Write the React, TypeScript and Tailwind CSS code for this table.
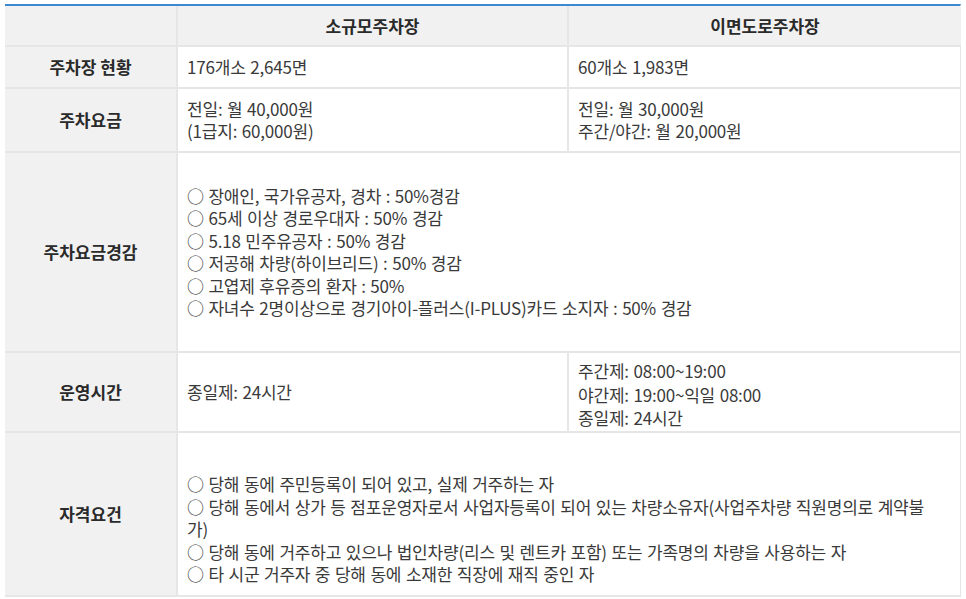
import React from "react";

const font = { fontFamily: '"Noto Sans CJK KR", "Noto Sans", sans-serif' };

function Label({ children }: { children: React.ReactNode }) {
  return (
    <div className="flex items-center justify-center bg-[#f1f1f1] border-r-2 border-b-2 border-[#e6e6e6] font-bold text-[17px] text-[#2a2a2a]">
      {children}
    </div>
  );
}

function Cell({
  children,
  span = false,
  right = true,
  extra = "",
}: {
  children: React.ReactNode;
  span?: boolean;
  right?: boolean;
  extra?: string;
}) {
  return (
    <div
      className={
        "flex px-[9px] text-[17px] leading-[22.5px] tracking-[-0.2px] [word-spacing:1px] text-[#3a3a3a] border-b-2 border-[#e6e6e6] whitespace-nowrap " +
        (span ? "col-span-2 " : "") +
        (right ? "border-r-2 " : "") +
        extra
      }
    >
      {children}
    </div>
  );
}

export default function App() {
  return (
    <div className="w-[966px] h-[599px] bg-white overflow-hidden" style={font}>
      <div className="ml-[5px] mt-[4px] w-[956px] border-t-2 border-[#3a89d2] border-r border-r-[#e6e6e6] grid grid-cols-[173px_391px_392px] grid-rows-[41px_42px_64px_200px_80px_164px]">
        {/* header */}
        <div className="bg-[#f1f1f1] border-r-2 border-b-2 border-[#e6e6e6]" />
        <div className="bg-[#f1f1f1] border-r-2 border-b-2 border-[#e6e6e6] flex items-center justify-center text-[17px] font-bold text-[#2a2a2a]">
          소규모주차장
        </div>
        <div className="bg-[#f1f1f1] border-b-2 border-[#e6e6e6] flex items-center justify-center text-[17px] font-bold text-[#2a2a2a]">
          이면도로주차장
        </div>

        {/* row 1 */}
        <Label>주차장 현황</Label>
        <Cell extra="items-center">176개소 2,645면</Cell>
        <Cell right={false} extra="items-center">60개소 1,983면</Cell>

        {/* row 2 */}
        <Label>주차요금</Label>
        <Cell extra="items-center">
          <div>
            전일: 월 40,000원
            <br />
            (1급지: 60,000원)
          </div>
        </Cell>
        <Cell right={false} extra="items-center">
          <div>
            전일: 월 30,000원
            <br />
            주간/야간: 월 20,000원
          </div>
        </Cell>

        {/* row 3 */}
        <Label>주차요금경감</Label>
        <Cell span right={false} extra="items-center">
          <div>
            ○ 장애인, 국가유공자, 경차 : 50%경감
            <br />
            ○ 65세 이상 경로우대자 : 50% 경감
            <br />
            ○ 5.18 민주유공자 : 50% 경감
            <br />
            ○ 저공해 차량(하이브리드) : 50% 경감
            <br />
            ○ 고엽제 후유증의 환자 : 50%
            <br />
            ○ 자녀수 2명이상으로 경기아이-플러스(I-PLUS)카드 소지자 : 50% 경감
          </div>
        </Cell>

        {/* row 4 */}
        <Label>운영시간</Label>
        <Cell extra="items-center">종일제: 24시간</Cell>
        <Cell right={false} extra="items-center pt-[5px]">
          <div className="leading-[23.5px]">
            주간제: 08:00~19:00
            <br />
            야간제: 19:00~익일 08:00
            <br />
            종일제: 24시간
          </div>
        </Cell>

        {/* row 5 */}
        <Label>자격요건</Label>
        <Cell span right={false} extra="items-start pt-[40px]">
          <div>
            ○ 당해 동에 주민등록이 되어 있고, 실제 거주하는 자
            <br />
            ○ 당해 동에서 상가 등 점포운영자로서 사업자등록이 되어 있는 차량소유자(사업주차량 직원명의로 계약불
            <br />
            가)
            <br />
            ○ 당해 동에 거주하고 있으나 법인차량(리스 및 렌트카 포함) 또는 가족명의 차량을 사용하는 자
            <br />
            ○ 타 시군 거주자 중 당해 동에 소재한 직장에 재직 중인 자
          </div>
        </Cell>
      </div>
    </div>
  );
}
